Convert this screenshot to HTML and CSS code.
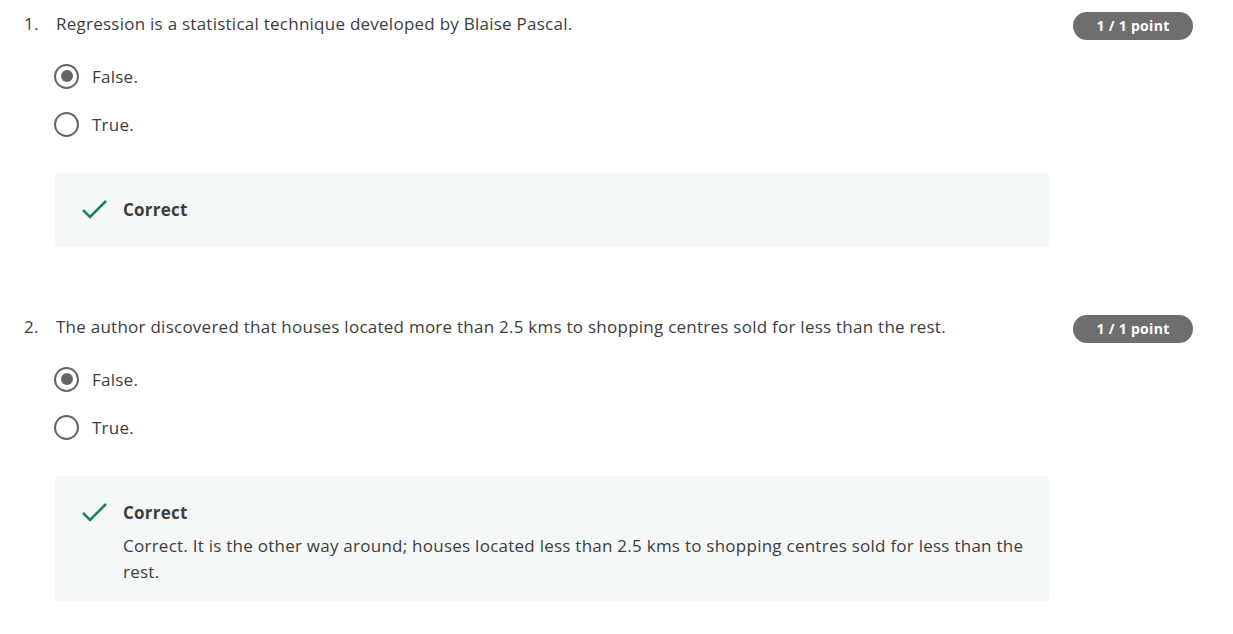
FILE: index.html
```html
<!DOCTYPE html>
<html>
<head>
<meta charset="utf-8">
<link rel="stylesheet" href="styles.css">
</head>
<body>
<div class="quiz">
  <div class="question">
    <div class="q-head">
      <div class="q-num">1.</div>
      <div class="q-text">Regression is a statistical technique developed by Blaise Pascal.</div>
      <div class="badge">1 / 1 point</div>
    </div>
    <div class="options">
      <div class="option"><span class="radio checked"></span><span class="opt-label">False.</span></div>
      <div class="option"><span class="radio"></span><span class="opt-label">True.</span></div>
    </div>
    <div class="feedback">
      <svg class="check" width="28" height="22" viewBox="0 0 28 22"><polyline points="2,11 9,18 25,2" fill="none" stroke="#1f8354" stroke-width="2.6"/></svg>
      <div class="fb-body">
        <div class="fb-title">Correct</div>
      </div>
    </div>
  </div>
  <div class="question q2">
    <div class="q-head">
      <div class="q-num">2.</div>
      <div class="q-text">The author discovered that houses located more than 2.5 kms to shopping centres sold for less than the rest.</div>
      <div class="badge">1 / 1 point</div>
    </div>
    <div class="options">
      <div class="option"><span class="radio checked"></span><span class="opt-label">False.</span></div>
      <div class="option"><span class="radio"></span><span class="opt-label">True.</span></div>
    </div>
    <div class="feedback fb-long">
      <svg class="check" width="28" height="22" viewBox="0 0 28 22"><polyline points="2,11 9,18 25,2" fill="none" stroke="#1f8354" stroke-width="2.6"/></svg>
      <div class="fb-body">
        <div class="fb-title">Correct</div>
        <div class="fb-text">Correct. It is the other way around; houses located less than 2.5 kms to shopping centres sold for less than the rest.</div>
      </div>
    </div>
  </div>
</div>
</body>
</html>
```

FILE: styles.css
```css
* { box-sizing: border-box; }
body {
  margin: 0;
  background: #fff;
  font-family: "Open Sans", "Liberation Sans", sans-serif;
  color: #3d3d3d;
  font-size: 17px;
  letter-spacing: 0.25px;
}
.quiz {
  padding: 12px 40px 0 24px;
  width: 1233px;
}
.question.q2 { margin-top: 68px; }
.q-head {
  display: flex;
  align-items: flex-start;
  line-height: 24px;
}
.q-num { width: 32px; flex: none; }
.q-text { flex: 1; }
.badge {
  flex: none;
  width: 120px;
  height: 28px;
  border-radius: 14px;
  background: #6e6e6e;
  color: #fff;
  font-weight: 700;
  font-size: 14px;
  letter-spacing: 0.3px;
  line-height: 28px;
  text-align: center;
}
.options {
  margin-top: 12px;
  padding-left: 30px;
}
.option {
  height: 48px;
  display: flex;
  align-items: center;
}
.radio {
  width: 25px;
  height: 25px;
  border-radius: 50%;
  border: 2.5px solid #666;
  flex: none;
  display: flex;
  align-items: center;
  justify-content: center;
}
.radio.checked::after {
  content: "";
  width: 12px;
  height: 12px;
  border-radius: 50%;
  background: #666;
}
.opt-label { margin-left: 13px; }
.feedback {
  margin-top: 25px;
  margin-left: 31px;
  width: 994px;
  background: #f5f8f8;
  display: flex;
  align-items: flex-start;
  padding: 25px 24px 25px 26px;
}
.fb-long { padding-bottom: 16px; }
.check { flex: none; margin-top: 1px; }
.fb-body { margin-left: 14px; flex: 1; }
.fb-title { font-weight: 700; line-height: 24px; }
.fb-text { margin-top: 8px; line-height: 26px; }
```
